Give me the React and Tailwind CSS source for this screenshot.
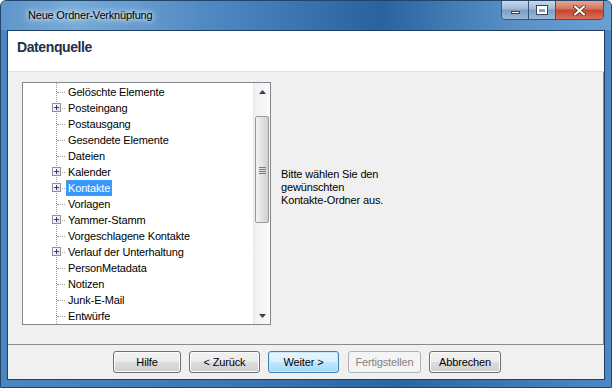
const items = [
  { label: 'Gelöschte Elemente' },
  { label: 'Posteingang', plus: true },
  { label: 'Postausgang' },
  { label: 'Gesendete Elemente' },
  { label: 'Dateien' },
  { label: 'Kalender', plus: true },
  { label: 'Kontakte', plus: true, selected: true },
  { label: 'Vorlagen' },
  { label: 'Yammer-Stamm', plus: true },
  { label: 'Vorgeschlagene Kontakte' },
  { label: 'Verlauf der Unterhaltung', plus: true },
  { label: 'PersonMetadata' },
  { label: 'Notizen' },
  { label: 'Junk-E-Mail' },
  { label: 'Entwürfe' },
];

const TreeRow = ({ item }) => (
  <div className="relative flex h-[16px] items-center">
    {/* horizontal dotted connector */}
    <div className="absolute left-[34px] top-[8px] w-[8px] border-t border-dotted border-[#a0a0a0]" />
    {item.plus && (
      <div className="absolute left-[29px] top-[3px] flex h-[9px] w-[9px] items-center justify-center border border-[#919191] bg-[linear-gradient(135deg,#ffffff,#e0e0e0)]">
        <svg width="7" height="7" viewBox="0 0 7 7">
          <path d="M1 3.5h5M3.5 1v5" stroke="#1f3f8a" strokeWidth="1" />
        </svg>
      </div>
    )}
    <span
      className={
        item.selected
          ? 'ml-[43px] border border-dotted border-[#c28a30] bg-[#3399ff] px-[1px] leading-[14px] text-white'
          : 'ml-[44px] px-[1px] leading-[14px] text-black'
      }
    >
      {item.label}
    </span>
  </div>
);

const Scrollbar = () => (
  <div className="flex w-[17px] flex-col border-l border-[#e8e8e8] bg-[linear-gradient(90deg,#f0f0f0,#fafafa)]">
    <div className="flex h-[17px] items-center justify-center">
      <svg width="7" height="4" viewBox="0 0 7 4">
        <path d="M3.5 0L7 4H0z" fill="#404040" />
      </svg>
    </div>
    <div className="mx-[1px] mt-[16px] flex h-[107px] items-center justify-center rounded-[2px] border border-[#9a9a9a] bg-[linear-gradient(90deg,#f3f3f3,#e2e2e2_50%,#d0d0d0)]">
      <div className="flex flex-col gap-[1px] pt-[2px]">
        <div className="h-px w-[7px] bg-[#7a7a7a]" />
        <div className="h-px w-[7px] bg-[#7a7a7a]" />
        <div className="h-px w-[7px] bg-[#7a7a7a]" />
        <div className="h-px w-[7px] bg-[#7a7a7a]" />
      </div>
    </div>
    <div className="flex-1" />
    <div className="flex h-[17px] items-center justify-center">
      <svg width="7" height="4" viewBox="0 0 7 4">
        <path d="M0 0H7L3.5 4z" fill="#404040" />
      </svg>
    </div>
  </div>
);

const Button = ({ children, primary, disabled, w = 'w-[71px]' }) => (
  <button
    className={
      primary
        ? `h-[22px] ${w} rounded-[3px] border border-[#3c7fb1] bg-[linear-gradient(180deg,#eaf6fd,#d9f0fc_50%,#bee6fd_51%,#a7d9f5)] text-black shadow-[inset_0_0_0_1px_#c8e8fa]`
        : disabled
        ? `h-[22px] ${w} rounded-[3px] border border-[#adb2b5] bg-[#f4f4f4] text-[#838383]`
        : `h-[22px] ${w} rounded-[3px] border border-[#707070] bg-[linear-gradient(180deg,#f2f2f2,#ebebeb_50%,#dddddd_51%,#cfcfcf)] text-black shadow-[inset_0_0_0_1px_#fcfcfc]`
    }
  >
    {children}
  </button>
);

export default function App() {
  return (
    <div className="flex h-[388px] w-[612px] flex-col overflow-hidden rounded-t-[6px] border border-[#23456b] bg-[linear-gradient(90deg,#4c86c0,#3b76b2_40%,#2b66a4_65%,#4d88c2_100%)] font-['Liberation_Sans',Arial,sans-serif] text-[11px] tracking-[-0.15px]">
      {/* title bar */}
      <div className="relative flex h-[29px] items-center bg-[linear-gradient(90deg,#5f95c9,#78abd9_12%,#4e87c1_35%,#2a62a0_62%,#5a92c8_85%,#6a9fd0)]">
        <span className="ml-[27px] text-[11px] tracking-[-0.2px] text-black [text-shadow:0_0_8px_#ffffff,0_0_4px_#ffffff]">
          Neue Ordner-Verknüpfung
        </span>
        <div className="absolute right-[7px] top-[-1px] flex h-[20px] overflow-hidden rounded-b-[4px] border border-[#3a5674]">
          <div className="flex w-[27px] items-center justify-center border-r border-[#3a5674] bg-[linear-gradient(180deg,#c9d9ea,#9fb9d6_45%,#7c9cc2_50%,#9bbad9)]">
            <div className="mt-[5px] h-[3px] w-[9px] border border-[#33475e] bg-white" />
          </div>
          <div className="flex w-[27px] items-center justify-center border-r border-[#3a5674] bg-[linear-gradient(180deg,#c9d9ea,#9fb9d6_45%,#7c9cc2_50%,#9bbad9)]">
            <div className="h-[8px] w-[10px] border-[2px] border-t-[3px] border-white outline outline-1 outline-[#33475e]" />
          </div>
          <div className="flex w-[47px] items-center justify-center bg-[linear-gradient(180deg,#e8a493,#d2735c_45%,#c2452c_50%,#d9705a)]">
            <svg width="13" height="11" viewBox="0 0 13 11">
              <path d="M2 1.5L11 9.5M11 1.5L2 9.5" stroke="#4a1d14" strokeWidth="3.6" strokeLinecap="round" />
              <path d="M2 1.5L11 9.5M11 1.5L2 9.5" stroke="#ffffff" strokeWidth="2.2" strokeLinecap="round" />
            </svg>
          </div>
        </div>
      </div>

      {/* client area */}
      <div className="mx-[6px] mb-[7px] flex flex-1 flex-col border border-[#1f3f63] bg-[#f0f0f0]">
        <div className="flex h-[41px] items-start border-b border-[#dfdfdf] bg-white">
          <span className="ml-[9px] mt-[6px] text-[14px] font-bold tracking-[-0.4px] text-[#1e2f4d]">
            Datenquelle
          </span>
        </div>

        <div className="flex h-[273px] border-r border-b border-[#8a8a8a]">
          <div className="ml-[14px] mt-[10px] flex h-[243px] w-[249px] border border-[#828790] bg-white">
            <div className="relative flex-1 overflow-hidden">
              <div className="absolute bottom-0 left-[33px] top-0 border-l border-dotted border-[#a0a0a0]" />
              <div className="relative pt-[1px]">
                {items.map((item) => (
                  <TreeRow key={item.label} item={item} />
                ))}
              </div>
            </div>
            <Scrollbar />
          </div>
          <div className="ml-[10px] mt-[96px] leading-[13px] text-black">
            <div>Bitte wählen Sie den</div>
            <div>gewünschten</div>
            <div>Kontakte-Ordner aus.</div>
          </div>
        </div>

        <div className="flex flex-1 items-start pl-[105px] pt-[6px]">
          <Button w="w-[68px]">Hilfe</Button>
          <div className="w-[8px]" />
          <Button>&lt; Zurück</Button>
          <div className="w-[8px]" />
          <Button primary>Weiter &gt;</Button>
          <div className="w-[9px]" />
          <Button disabled w="w-[73px]">Fertigstellen</Button>
          <div className="w-[8px]" />
          <Button w="w-[72px]">Abbrechen</Button>
        </div>
      </div>
    </div>
  );
}
